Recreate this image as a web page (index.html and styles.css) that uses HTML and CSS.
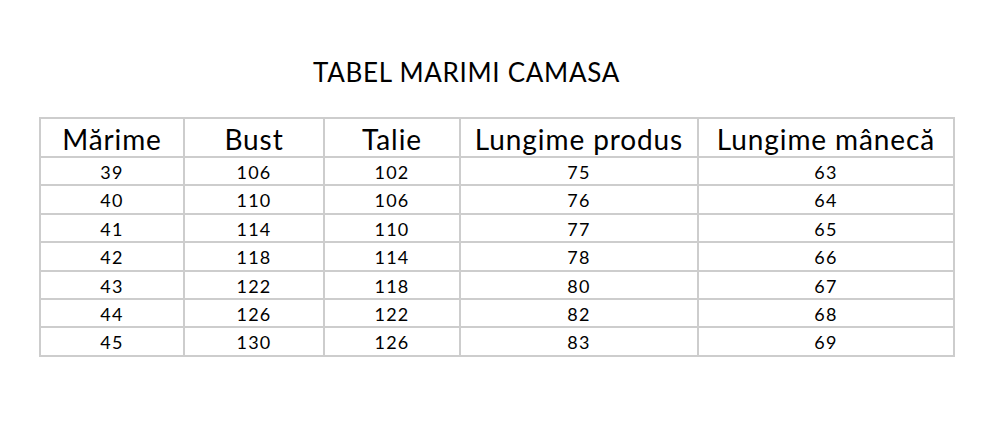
FILE: index.html
```
<!DOCTYPE html>
<html lang="ro">
<head>
<meta charset="utf-8">
<title>Tabel marimi camasa</title>
<link rel="stylesheet" href="styles.css">
</head>
<body>
<div class="page">
  <h1 class="title">TABEL MARIMI CAMASA</h1>
  <table class="sizes">
    <colgroup>
      <col class="c1"><col class="c2"><col class="c3"><col class="c4"><col class="c5">
    </colgroup>
    <thead>
      <tr><th>Mărime</th><th>Bust</th><th>Talie</th><th>Lungime produs</th><th>Lungime mânecă</th></tr>
    </thead>
    <tbody>
      <tr><td>39</td><td>106</td><td>102</td><td>75</td><td>63</td></tr>
      <tr><td>40</td><td>110</td><td>106</td><td>76</td><td>64</td></tr>
      <tr><td>41</td><td>114</td><td>110</td><td>77</td><td>65</td></tr>
      <tr><td>42</td><td>118</td><td>114</td><td>78</td><td>66</td></tr>
      <tr><td>43</td><td>122</td><td>118</td><td>80</td><td>67</td></tr>
      <tr><td>44</td><td>126</td><td>122</td><td>82</td><td>68</td></tr>
      <tr><td>45</td><td>130</td><td>126</td><td>83</td><td>69</td></tr>
    </tbody>
  </table>
</div>
</body>
</html>
```
FILE: styles.css
```
html, body {
  margin: 0;
  padding: 0;
  background: #ffffff;
}
.page {
  width: 1000px;
  height: 431px;
  padding: 54px 0 0 39px;
  box-sizing: border-box;
  font-family: Lato, "Open Sans", sans-serif;
  color: #000000;
}
.title {
  margin: 0 0 27px 274px;
  font-size: 26px;
  font-weight: 400;
  line-height: 36px;
  letter-spacing: 0.7px;
  white-space: nowrap;
}
.sizes {
  border-collapse: collapse;
  table-layout: fixed;
  width: 914px;
}
.c1 { width: 144px; }
.c2 { width: 140px; }
.c3 { width: 136px; }
.c4 { width: 238px; }
.c5 { width: 256px; }
.sizes th, .sizes td {
  border: 2px solid #cdcdcd;
  text-align: center;
  font-weight: 400;
}
.sizes th {
  height: 34px;
  padding: 3px 0 0;
  font-size: 28px;
  line-height: 34px;
  letter-spacing: 0.9px;
}
.sizes td {
  height: 23.4px;
  padding: 3px 0 0;
  font-size: 18px;
  line-height: 23.4px;
  letter-spacing: 1.2px;
}
```
